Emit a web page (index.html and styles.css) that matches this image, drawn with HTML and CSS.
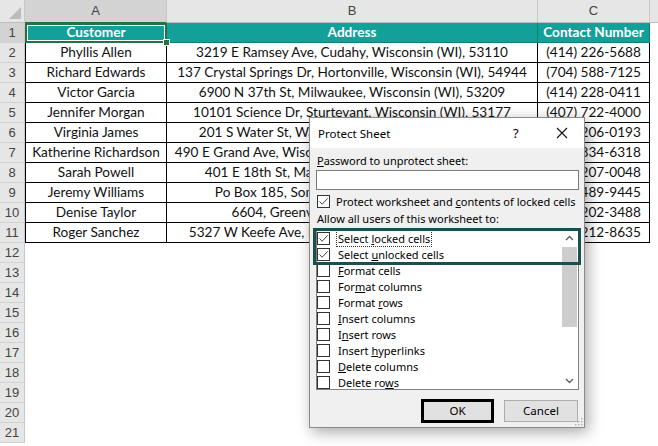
FILE: index.html
```html
<!DOCTYPE html>
<html>
<head>
<meta charset="utf-8">
<link rel="stylesheet" href="styles.css">
</head>
<body>
<div class="sheet">
  <div class="row hdr">
    <div class="corner"><span class="tri"></span></div>
    <div class="ch a sel">A</div>
    <div class="ch b">B</div>
    <div class="ch c">C</div>
    <div class="ch rest"></div>
  </div>
  <div class="row">
    <div class="rh sel">1</div>
    <div class="cell a head active">Customer<span class="handle"></span></div>
    <div class="cell b head">Address</div>
    <div class="cell c head">Contact Number</div>
  </div>
  <div class="row"><div class="rh">2</div><div class="cell a">Phyllis Allen</div><div class="cell b">3219 E Ramsey Ave, Cudahy, Wisconsin (WI), 53110</div><div class="cell c">(414) 226-5688</div></div>
  <div class="row"><div class="rh">3</div><div class="cell a">Richard Edwards</div><div class="cell b">137 Crystal Springs Dr, Hortonville, Wisconsin (WI), 54944</div><div class="cell c">(704) 588-7125</div></div>
  <div class="row"><div class="rh">4</div><div class="cell a">Victor Garcia</div><div class="cell b">6900 N 37th St, Milwaukee, Wisconsin (WI), 53209</div><div class="cell c">(414) 228-0411</div></div>
  <div class="row"><div class="rh">5</div><div class="cell a">Jennifer Morgan</div><div class="cell b">10101 Science Dr, Sturtevant, Wisconsin (WI), 53177</div><div class="cell c">(407) 722-4000</div></div>
  <div class="row"><div class="rh">6</div><div class="cell a">Virginia James</div><div class="cell b">201 S Water St, Watertown, Wisconsin (WI), 53094</div><div class="cell c">(920) 206-0193</div></div>
  <div class="row"><div class="rh">7</div><div class="cell a">Katherine Richardson</div><div class="cell b">490 E Grand Ave, Wisconsin Rapids, Wisconsin (WI), 54494</div><div class="cell c">(715) 834-6318</div></div>
  <div class="row"><div class="rh">8</div><div class="cell a">Sarah Powell</div><div class="cell b">401 E 18th St, Marshfield, Wisconsin (WI), 54449</div><div class="cell c">(715) 207-0048</div></div>
  <div class="row"><div class="rh">9</div><div class="cell a">Jeremy Williams</div><div class="cell b">Po Box 185, Somerset, Wisconsin (WI), 54025</div><div class="cell c">(715) 489-9445</div></div>
  <div class="row"><div class="rh">10</div><div class="cell a">Denise Taylor</div><div class="cell b">6604, Greenville, Wisconsin (WI), 54942</div><div class="cell c">(920) 202-3488</div></div>
  <div class="row"><div class="rh">11</div><div class="cell a">Roger Sanchez</div><div class="cell b">5327 W Keefe Ave, Milwaukee, Wisconsin (WI), 53216</div><div class="cell c">(414) 212-8635</div></div>
  <div class="row"><div class="rh">12</div></div>
  <div class="row"><div class="rh">13</div></div>
  <div class="row"><div class="rh">14</div></div>
  <div class="row"><div class="rh">15</div></div>
  <div class="row"><div class="rh">16</div></div>
  <div class="row"><div class="rh">17</div></div>
  <div class="row"><div class="rh">18</div></div>
  <div class="row"><div class="rh">19</div></div>
  <div class="row"><div class="rh">20</div></div>
  <div class="row"><div class="rh">21</div></div>

  <div class="dialog">
    <div class="titlebar">
      <span class="title">Protect Sheet</span>
      <span class="help">?</span>
      <svg class="close" width="12" height="12" viewBox="0 0 12 12"><path d="M1 1 L11 11 M11 1 L1 11" stroke="#111" stroke-width="1.1" fill="none"/></svg>
    </div>
    <div class="body">
      <div class="lbl"><u>P</u>assword to unprotect sheet:</div>
      <div class="input"></div>
      <div class="check-row">
        <span class="cb"><svg width="11" height="11" viewBox="0 0 11 11"><path d="M1.5 5.5 L4.2 8.2 L9.6 2.4" stroke="#444" stroke-width="1" fill="none"/></svg></span>
        <span>Protect worksheet and <u>c</u>ontents of locked cells</span>
      </div>
      <div class="lbl lbl2">Allow all users of this worksheet to:</div>
      <div class="list">
        <div class="items">
          <div class="item"><span class="cb"><svg width="11" height="11" viewBox="0 0 11 11"><path d="M1.5 5.5 L4.2 8.2 L9.6 2.4" stroke="#444" stroke-width="1" fill="none"/></svg></span><span class="focus">Select <u>l</u>ocked cells</span></div>
          <div class="item"><span class="cb"><svg width="11" height="11" viewBox="0 0 11 11"><path d="M1.5 5.5 L4.2 8.2 L9.6 2.4" stroke="#444" stroke-width="1" fill="none"/></svg></span><span>Select <u>u</u>nlocked cells</span></div>
          <div class="item"><span class="cb"></span><span><u>F</u>ormat cells</span></div>
          <div class="item"><span class="cb"></span><span>For<u>m</u>at columns</span></div>
          <div class="item"><span class="cb"></span><span>Format <u>r</u>ows</span></div>
          <div class="item"><span class="cb"></span><span><u>I</u>nsert columns</span></div>
          <div class="item"><span class="cb"></span><span>I<u>n</u>sert rows</span></div>
          <div class="item"><span class="cb"></span><span>Insert <u>h</u>yperlinks</span></div>
          <div class="item"><span class="cb"></span><span><u>D</u>elete columns</span></div>
          <div class="item"><span class="cb"></span><span>Delete ro<u>w</u>s</span></div>
        </div>
        <div class="scroll">
          <div class="arrow"><svg width="9" height="6" viewBox="0 0 9 6"><path d="M1 5 L4.5 1.5 L8 5" stroke="#606060" stroke-width="1.4" fill="none"/></svg></div>
          <div class="track"><div class="thumb"></div></div>
          <div class="arrow"><svg width="9" height="6" viewBox="0 0 9 6"><path d="M1 1 L4.5 4.5 L8 1" stroke="#606060" stroke-width="1.4" fill="none"/></svg></div>
        </div>
      </div>
      <div class="buttons">
        <div class="btn ok">OK</div>
        <div class="btn cancel">Cancel</div>
      </div>
    </div>
    <div class="highlight"></div>
    <svg class="grip" width="8" height="8" viewBox="0 0 8 8"><g fill="#b5b5b5"><rect x="6" y="0" width="1.5" height="1.5"/><rect x="3" y="3" width="1.5" height="1.5"/><rect x="6" y="3" width="1.5" height="1.5"/><rect x="0" y="6" width="1.5" height="1.5"/><rect x="3" y="6" width="1.5" height="1.5"/><rect x="6" y="6" width="1.5" height="1.5"/></g></svg>
  </div>
</div>
</body>
</html>
```

FILE: styles.css
```css
* { box-sizing: border-box; }
body {
  margin: 0;
  background: #fff;
  font-family: Lato, "Open Sans", sans-serif;
  overflow: hidden;
}
.sheet {
  position: relative;
  width: 658px;
  height: 446px;
  overflow: hidden;
}
.row {
  display: flex;
  height: 20px;
}
.hdr {
  height: 23px;
  background: #e6e6e6;
}
.corner {
  position: relative;
  width: 25px;
  height: 23px;
  border-right: 1px solid #c8c8c8;
  border-bottom: 1px solid #bdbdbd;
}
.tri {
  position: absolute;
  right: 3px;
  bottom: 3px;
  width: 0;
  height: 0;
  border-left: 12px solid transparent;
  border-bottom: 12px solid #bcbcbc;
}
.ch {
  height: 23px;
  border-right: 1px solid #c8c8c8;
  border-bottom: 1px solid #bdbdbd;
  text-align: center;
  font-family: "Liberation Sans", sans-serif;
  font-size: 13px;
  line-height: 22px;
  color: #444;
}
.ch.sel {
  background: #d3d3d3;
  border-bottom: 1px solid #217346;
}
.ch.rest {
  flex: 1;
  border-right: none;
}
.a { width: 142px; }
.b { width: 371px; }
.c { width: 112px; }
.rh {
  width: 25px;
  height: 20px;
  background: #e6e6e6;
  border-right: 1px solid #c8c8c8;
  border-bottom: 1px solid #d2d2d2;
  text-align: center;
  font-family: "Liberation Sans", sans-serif;
  font-size: 13px;
  line-height: 20px;
  color: #444;
}
.rh.sel {
  background: #d3d3d3;
}
.cell {
  height: 20px;
  border-right: 1px solid #000;
  border-bottom: 1px solid #000;
  text-align: center;
  font-size: 13.6px;
  line-height: 19px;
  color: #111;
  white-space: nowrap;
  overflow: hidden;
}
.cell.a {
  border-left: 1px solid #000;
}
.cell.head {
  background: #12a099;
  color: #fff;
  font-weight: bold;
  border-color: #0f7f7a;
  overflow: visible;
}
.cell.active {
  position: relative;
}
.cell.active::after {
  content: "";
  position: absolute;
  left: -1px;
  top: 0;
  right: -1px;
  bottom: -1px;
  border: 2px solid #217346;
  box-shadow: inset 0 0 0 1px #fff;
}
.handle {
  position: absolute;
  right: -4px;
  bottom: -4px;
  width: 7px;
  height: 7px;
  background: #217346;
  border: 1px solid #fff;
  z-index: 2;
}

/* dialog */
.dialog {
  position: absolute;
  left: 309px;
  top: 117px;
  width: 276px;
  height: 311px;
  border: 1px solid #8a8a8a;
  background: #f0f0f0;
  box-shadow: 3px 4px 14px rgba(0, 0, 0, 0.35);
  font-family: "Noto Sans", sans-serif;
  font-size: 11px;
  color: #000;
  display: flex;
  flex-direction: column;
}
.titlebar {
  height: 30px;
  background: #fff;
  display: flex;
  align-items: center;
  padding-left: 8px;
}
.title {
  flex: 1;
  font-size: 11.5px;
}
.help {
  font-size: 13px;
  width: 20px;
  margin-right: 23px;
}
.close {
  margin-right: 16px;
}
.body {
  flex: 1;
  padding: 5px 6px 0 6px;
  display: flex;
  flex-direction: column;
}
.lbl {
  height: 16px;
  line-height: 16px;
  padding-left: 1px;
}
.input {
  margin-top: 1px;
  height: 20px;
  width: 263px;
  background: #fff;
  border: 1px solid #7a7a7a;
}
.check-row {
  margin-top: 5px;
  height: 13px;
  display: flex;
  align-items: center;
  padding-left: 1px;
  gap: 6px;
  white-space: nowrap;
}
.cb {
  flex: none;
  width: 13px;
  height: 13px;
  border: 1px solid #333;
  background: #fff;
  display: flex;
  align-items: center;
  justify-content: center;
}
.lbl2 {
  margin-top: 3px;
}
.list {
  margin-top: 1px;
  height: 162px;
  width: 263px;
  border: 1px solid #828282;
  background: #fff;
  display: flex;
  overflow: hidden;
}
.items {
  flex: 1;
  padding-top: 1px;
}
.item {
  height: 16px;
  display: flex;
  align-items: center;
  gap: 8px;
  white-space: nowrap;
}
.focus {
  outline: 1px dotted #333;
  outline-offset: 0;
  padding: 0 1px;
  margin-left: -1px;
}
.scroll {
  width: 17px;
  display: flex;
  flex-direction: column;
  background: #fff;
}
.arrow {
  height: 17px;
  display: flex;
  align-items: center;
  justify-content: center;
}
.track {
  flex: 1;
  padding: 1px 1px 0 1px;
}
.thumb {
  height: 80px;
  background: #cdcdcd;
}
.buttons {
  margin-top: 9px;
  display: flex;
  justify-content: flex-end;
  align-items: center;
  gap: 10px;
  padding-right: 0;
}
.btn {
  background: #e1e1e1;
  text-align: center;
  font-size: 11.5px;
}
.ok {
  width: 73px;
  height: 24px;
  line-height: 18px;
  border: 3px solid #000;
}
.cancel {
  width: 74px;
  height: 22px;
  line-height: 20px;
  border: 1px solid #adadad;
}
.highlight {
  position: absolute;
  left: 3px;
  top: 110px;
  width: 268px;
  height: 37px;
  border: 3px solid #1b4f4f;
  pointer-events: none;
}
.grip {
  position: absolute;
  right: 1px;
  bottom: 1px;
}
```
